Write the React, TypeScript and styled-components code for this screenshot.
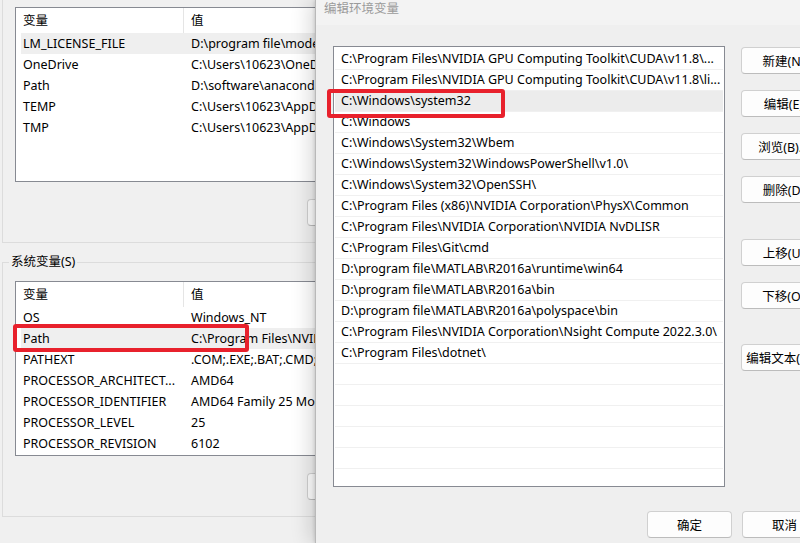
import React from "react";
import styled, { createGlobalStyle } from "styled-components";

const GlobalStyle = createGlobalStyle`
  html, body {
    margin: 0;
    padding: 0;
    background: #f0f0f0;
  }
  body {
    font-family: "Noto Sans", "Noto Sans CJK SC", sans-serif;
    font-size: 12px;
    color: #000;
  }
`;

const Desktop = styled.div`
  position: relative;
  width: 800px;
  height: 543px;
  overflow: hidden;
  background: #f0f0f0;
`;

/* ---------- background window: 环境变量 ---------- */

const EnvWindow = styled.div`
  position: absolute;
  left: 0;
  top: 0;
  width: 430px;
  height: 543px;
  background: #f0f0f0;
  display: flex;
  flex-direction: column;
`;

const GroupBox = styled.fieldset<{ $top?: number; $padTop?: number }>`
  margin: ${(p) => p.$top ?? 0}px 0 0 2px;
  padding: ${(p) => p.$padTop ?? 16}px 0 16px 12px;
  border: 1px solid #dcdcdc;
  min-width: 0;
`;

const GroupLabel = styled.legend`
  margin-left: -6px;
  padding: 0 2px;
  font-size: 12.5px;
  line-height: 16px;
  color: #000;
`;

/* the list runs on under the front dialog; it is cut where that dialog begins */
const VarList = styled.div<{ $top?: number }>`
  margin-top: ${(p) => p.$top ?? 0}px;
  width: 299px;
  height: 173px;
  background: #fff;
  border: 1px solid #878a92;
  border-right: none;
`;

const VarHeader = styled.div`
  display: grid;
  grid-template-columns: 168px 1fr;
  height: 25px;
  align-items: center;
`;

const HeaderCell = styled.div<{ $divider?: boolean }>`
  padding-left: 7px;
  height: 25px;
  line-height: 25px;
  border-right: ${(p) => (p.$divider ? "1px solid #e5e5e5" : "none")};
  font-size: 12.5px;
`;

const VarRow = styled.div<{ $selected?: boolean }>`
  position: relative;
  display: grid;
  grid-template-columns: 163px 1fr;
  margin-left: 5px;
  height: 21px;
  line-height: 21px;
  background: ${(p) => (p.$selected ? "#efefef" : "transparent")};
  white-space: nowrap;
`;

const Cell = styled.div<{ $pad: number }>`
  padding-left: ${(p) => p.$pad}px;
  overflow: hidden;
  font-size: 12.5px;
`;

const SideButtonRow = styled.div`
  display: flex;
  margin-top: 17px;
  padding-left: 292px;
`;

/* ---------- foreground dialog: 编辑环境变量 ---------- */

const EditDialog = styled.div`
  position: absolute;
  left: 315px;
  top: 0;
  width: 529px;
  height: 543px;
  background: #efefef;
  border-left: 1px solid #b9b9b9;
  box-shadow: -6px 0 18px rgba(0, 0, 0, 0.14), -1px 0 3px rgba(0, 0, 0, 0.12);
  display: flex;
  flex-direction: column;
`;

const TitleBar = styled.div`
  height: 25px;
  padding-left: 8px;
  line-height: 18px;
  background: #f3f3f3;
  color: #9b9b9b;
  font-size: 12.5px;
`;

const DialogMain = styled.div`
  display: flex;
  gap: 16px;
  padding: 21px 0 0 17px;
`;

const PathList = styled.div`
  width: 390px;
  height: 437px;
  padding-top: 2px;
  background: #fff;
  border: 1px solid #878a92;
`;

const PathRow = styled.div<{ $selected?: boolean }>`
  position: relative;
  height: 20px;
  line-height: 20px;
  margin: 0 1px;
  padding-left: 6px;
  border-bottom: 1px solid #f0f0f0;
  background: ${(p) => (p.$selected ? "#ececec" : "transparent")};
  white-space: nowrap;
  font-size: 12.5px;
`;

const ButtonColumn = styled.div`
  display: flex;
  flex-direction: column;
  gap: 16px;
  padding-top: 1px;
`;

const WinButton = styled.button<{ $gap?: number }>`
  flex: none;
  width: 85px;
  height: 27px;
  margin-top: ${(p) => p.$gap ?? 0}px;
  padding: 0;
  background: #fdfdfd;
  border: 1px solid #d0d0d0;
  border-bottom-color: #bcbcbc;
  border-radius: 4px;
  font-family: "Noto Sans", "Noto Sans CJK SC", sans-serif;
  font-size: 12.5px;
  color: #000;
  white-space: nowrap;
  overflow: hidden;
`;

const DialogFooter = styled.div`
  display: flex;
  justify-content: flex-end;
  gap: 10px;
  margin-top: 24px;
  padding-right: 18px;
`;

/* red annotation boxes drawn over the screenshot */
const Highlight = styled.span<{ $l: number; $t: number; $w: number; $h: number }>`
  position: absolute;
  z-index: 2;
  left: ${(p) => p.$l}px;
  top: ${(p) => p.$t}px;
  width: ${(p) => p.$w}px;
  height: ${(p) => p.$h}px;
  border: 4px solid #e8212c;
  border-radius: 3px;
  box-sizing: border-box;
  pointer-events: none;
`;

const userVars = [
  ["LM_LICENSE_FILE", "D:\\program file\\modeltech64_10.4\\win64\\license.dat"],
  ["OneDrive", "C:\\Users\\10623\\OneDrive"],
  ["Path", "D:\\software\\anaconda3;D:\\software\\anaconda3\\Scripts"],
  ["TEMP", "C:\\Users\\10623\\AppData\\Local\\Temp"],
  ["TMP", "C:\\Users\\10623\\AppData\\Local\\Temp"],
];

const sysVars = [
  ["OS", "Windows_NT"],
  ["Path", "C:\\Program Files\\NVIDIA GPU Computing Toolkit\\CUDA\\v11.8\\bin"],
  ["PATHEXT", ".COM;.EXE;.BAT;.CMD;.VBS;.VBE;.JS;.JSE;.WSF;.WSH;.MSC"],
  ["PROCESSOR_ARCHITECT...", "AMD64"],
  ["PROCESSOR_IDENTIFIER", "AMD64 Family 25 Model 80 Stepping 0, AuthenticAMD"],
  ["PROCESSOR_LEVEL", "25"],
  ["PROCESSOR_REVISION", "6102"],
];

const paths = [
  "C:\\Program Files\\NVIDIA GPU Computing Toolkit\\CUDA\\v11.8\\...",
  "C:\\Program Files\\NVIDIA GPU Computing Toolkit\\CUDA\\v11.8\\li...",
  "C:\\Windows\\system32",
  "C:\\Windows",
  "C:\\Windows\\System32\\Wbem",
  "C:\\Windows\\System32\\WindowsPowerShell\\v1.0\\",
  "C:\\Windows\\System32\\OpenSSH\\",
  "C:\\Program Files (x86)\\NVIDIA Corporation\\PhysX\\Common",
  "C:\\Program Files\\NVIDIA Corporation\\NVIDIA NvDLISR",
  "C:\\Program Files\\Git\\cmd",
  "D:\\program file\\MATLAB\\R2016a\\runtime\\win64",
  "D:\\program file\\MATLAB\\R2016a\\bin",
  "D:\\program file\\MATLAB\\R2016a\\polyspace\\bin",
  "C:\\Program Files\\NVIDIA Corporation\\Nsight Compute 2022.3.0\\",
  "C:\\Program Files\\dotnet\\",
  "",
  "",
  "",
  "",
  "",
];

const VarTable = ({
  rows,
  selected,
  mark,
}: {
  rows: string[][];
  selected: number;
  mark?: number;
}) => (
  <>
    <VarHeader>
      <HeaderCell $divider>变量</HeaderCell>
      <HeaderCell>值</HeaderCell>
    </VarHeader>
    {rows.map(([name, value], i) => (
      <VarRow key={name} $selected={i === selected}>
        <Cell $pad={2}>{name}</Cell>
        <Cell $pad={7}>{value}</Cell>
        {mark === i && <Highlight $l={-8} $t={-4} $w={236} $h={28} />}
      </VarRow>
    ))}
  </>
);

const App = () => {
  return (
    <Desktop>
      <GlobalStyle />
      <EnvWindow>
        <GroupBox $top={-10}>
          <VarList>
            <VarTable rows={userVars} selected={0} />
          </VarList>
          <SideButtonRow>
            <WinButton aria-label="新建" />
          </SideButtonRow>
        </GroupBox>
        <GroupBox $top={11} $padTop={0}>
          <GroupLabel>系统变量(S)</GroupLabel>
          <VarList $top={11}>
            <VarTable rows={sysVars} selected={1} mark={1} />
          </VarList>
          <SideButtonRow>
            <WinButton aria-label="新建" />
          </SideButtonRow>
        </GroupBox>
      </EnvWindow>

      <EditDialog>
        <TitleBar>编辑环境变量</TitleBar>
        <DialogMain>
          <PathList>
            {paths.map((p, i) => (
              <PathRow key={i} $selected={i === 2}>
                {p}
                {i === 2 && <Highlight $l={-8} $t={-2} $w={178} $h={29} />}
              </PathRow>
            ))}
          </PathList>
          <ButtonColumn>
            <WinButton>新建(N)</WinButton>
            <WinButton>编辑(E)</WinButton>
            <WinButton>浏览(B)...</WinButton>
            <WinButton>删除(D)</WinButton>
            <WinButton $gap={20}>上移(U)</WinButton>
            <WinButton>下移(O)</WinButton>
            <WinButton $gap={19}>编辑文本(T)...</WinButton>
          </ButtonColumn>
        </DialogMain>
        <DialogFooter>
          <WinButton>确定</WinButton>
          <WinButton>取消</WinButton>
        </DialogFooter>
      </EditDialog>
    </Desktop>
  );
};

export default App;
